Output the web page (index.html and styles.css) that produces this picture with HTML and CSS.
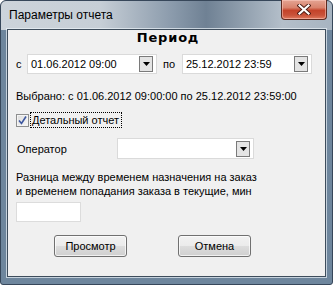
FILE: index.html
```html
<!DOCTYPE html>
<html lang="ru">
<head>
  <meta charset="UTF-8" />
  <title>Параметры отчета</title>
  <link rel="stylesheet" href="styles.css">
</head>
<body>
  <div class="window">
    <div class="titlebar">
      <span class="title">Параметры отчета</span>
      <button class="close" aria-label="Закрыть">
        <svg width="14" height="11" viewBox="0 0 14 11">
          <path d="M2.5 1.5 L11.5 9.5 M11.5 1.5 L2.5 9.5" stroke="#4a1a12" stroke-width="4" stroke-linecap="square" fill="none"/>
          <path d="M2.5 1.5 L11.5 9.5 M11.5 1.5 L2.5 9.5" stroke="#fff" stroke-width="2.2" stroke-linecap="square" fill="none"/>
        </svg>
      </button>
    </div>

    <div class="client">
      <div class="heading">Период</div>

      <div class="period-row">
        <span class="lbl-from">с</span>
        <div class="combo combo-date">
          <span class="value">01.06.2012 09:00</span>
          <span class="drop"><svg width="7" height="4" viewBox="0 0 7 4"><path d="M0 0 H7 L3.5 4 Z" fill="#000"/></svg></span>
        </div>
        <span class="lbl-to">по</span>
        <div class="combo combo-date">
          <span class="value">25.12.2012 23:59</span>
          <span class="drop"><svg width="7" height="4" viewBox="0 0 7 4"><path d="M0 0 H7 L3.5 4 Z" fill="#000"/></svg></span>
        </div>
      </div>

      <div class="selected">Выбрано: с 01.06.2012 09:00:00 по 25.12.2012 23:59:00</div>

      <label class="check-row">
        <span class="checkbox">
          <svg width="9" height="9" viewBox="0 0 9 9"><path d="M1 4.5 L3.5 7.5 L8 0.5" stroke="#3d57a0" stroke-width="1.6" fill="none"/></svg>
        </span>
        <span class="focus">Детальный отчет</span>
      </label>

      <div class="operator-row">
        <span class="lbl-op">Оператор</span>
        <div class="combo combo-op">
          <span class="value"></span>
          <span class="drop"><svg width="7" height="4" viewBox="0 0 7 4"><path d="M0 0 H7 L3.5 4 Z" fill="#000"/></svg></span>
        </div>
      </div>

      <p class="note">Разница между временем назначения на заказ<br>и временем попадания заказа в текущие, мин</p>

      <div class="textbox"></div>

      <div class="buttons">
        <button class="btn">Просмотр</button>
        <button class="btn">Отмена</button>
      </div>
    </div>
  </div>
</body>
</html>
```

FILE: styles.css
```css
/* Base */
*, *::before, *::after {
  box-sizing: border-box;
}
html, body {
  margin: 0;
  padding: 0;
  background: #ffffff;
}

/* Window frame */
.window {
  width: 333px;
  height: 285px;
  border: 1px solid #37475a;
  border-radius: 6px 6px 3px 3px;
  background:
    linear-gradient(90deg, #cdd4db 0%, #c6ced6 30%, #8a9aab 52%, #6f8194 62%, #8d9cab 72%, #b4bfca 85%, #a7b4c1 100%) top / 100% 29px no-repeat,
    #6e869d;
  display: flex;
  flex-direction: column;
  font-family: "Liberation Sans", Arial, sans-serif;
}

.titlebar {
  height: 28px;
  display: flex;
  align-items: flex-start;
}
.title {
  font-size: 12px;
  color: #000;
  padding: 7px 0 0 8px;
}
.close {
  margin: -1px 5px 0 auto;
  width: 46px;
  height: 20px;
  padding: 0;
  border: 1px solid #5e2a20;
  border-top: none;
  border-radius: 0 0 4px 4px;
  background: linear-gradient(#e4a493 0%, #d9836d 40%, #c4432a 55%, #c9533a 80%, #e07a5f 100%);
  box-shadow: inset 0 0 0 1px rgba(255, 210, 200, 0.5);
  display: flex;
  align-items: center;
  justify-content: center;
}

/* Client area */
.client {
  margin: 0 6px 0 6px;
  height: 248px;
  background: #f0f0f0;
  border: 1px solid #3e4d5c;
  box-shadow: 0 0 0 1px rgba(235, 242, 248, 0.7);
  font-size: 11px;
  color: #000;
  display: flex;
  flex-direction: column;
  align-items: flex-start;
}

.heading {
  align-self: stretch;
  text-align: center;
  font-family: "DejaVu Sans", sans-serif;
  font-weight: bold;
  font-size: 13px;
  line-height: 16px;
  padding-left: 3px;
  letter-spacing: 0.8px;
}

/* Combos */
.combo {
  height: 20px;
  background: #fff;
  border: 1px solid #dadada;
  display: flex;
  align-items: center;
  justify-content: space-between;
  padding: 0 3px 0 3px;
}
.combo .value {
  font-size: 11px;
}
.drop {
  width: 14px;
  height: 16px;
  border: 1px solid #7a7a7a;
  background: #e4e4e4;
  display: flex;
  align-items: center;
  justify-content: center;
}

.period-row {
  margin-top: 8px;
  padding-left: 8px;
  display: flex;
  align-items: center;
}
.lbl-from {
  width: 11px;
}
.combo-date {
  width: 130px;
}
.lbl-to {
  width: 25px;
  padding-left: 6px;
}

.selected {
  margin-top: 15px;
  padding-left: 8px;
  line-height: 14px;
}

/* Checkbox */
.check-row {
  margin-top: 9px;
  padding-left: 8px;
  display: flex;
  align-items: center;
  gap: 1px;
}
.checkbox {
  width: 13px;
  height: 13px;
  border: 1px solid #8e8f8f;
  background: linear-gradient(135deg, #dcdcdc, #f8f8f8);
  box-shadow: inset 0 0 0 1px #f4f4f4;
  display: flex;
  align-items: center;
  justify-content: center;
}
.focus {
  border: 1px dotted #000;
  height: 16px;
  line-height: 14px;
  padding: 0 2px 0 1px;
}

.operator-row {
  margin-top: 10px;
  padding-left: 9px;
  display: flex;
  align-items: center;
}
.lbl-op {
  width: 100px;
}
.combo-op {
  width: 137px;
  height: 21px;
}

.note {
  margin: 11px 0 0;
  padding-left: 8px;
  line-height: 14px;
}

.textbox {
  margin: 4px 0 0 8px;
  width: 65px;
  height: 20px;
  background: #fff;
  border: 1px solid #dcdcdc;
}

/* Buttons */
.buttons {
  margin-top: 13px;
  padding-left: 46px;
  display: flex;
  gap: 51px;
}
.btn {
  width: 73px;
  height: 22px;
  border: 1px solid #707070;
  border-radius: 3px;
  background: linear-gradient(#f2f2f2 0%, #ebebeb 50%, #dddddd 51%, #cfcfcf 100%);
  box-shadow: inset 0 0 0 1px rgba(255, 255, 255, 0.7);
  font-family: "Liberation Sans", Arial, sans-serif;
  font-size: 11px;
  color: #000;
  padding: 0;
}
```
